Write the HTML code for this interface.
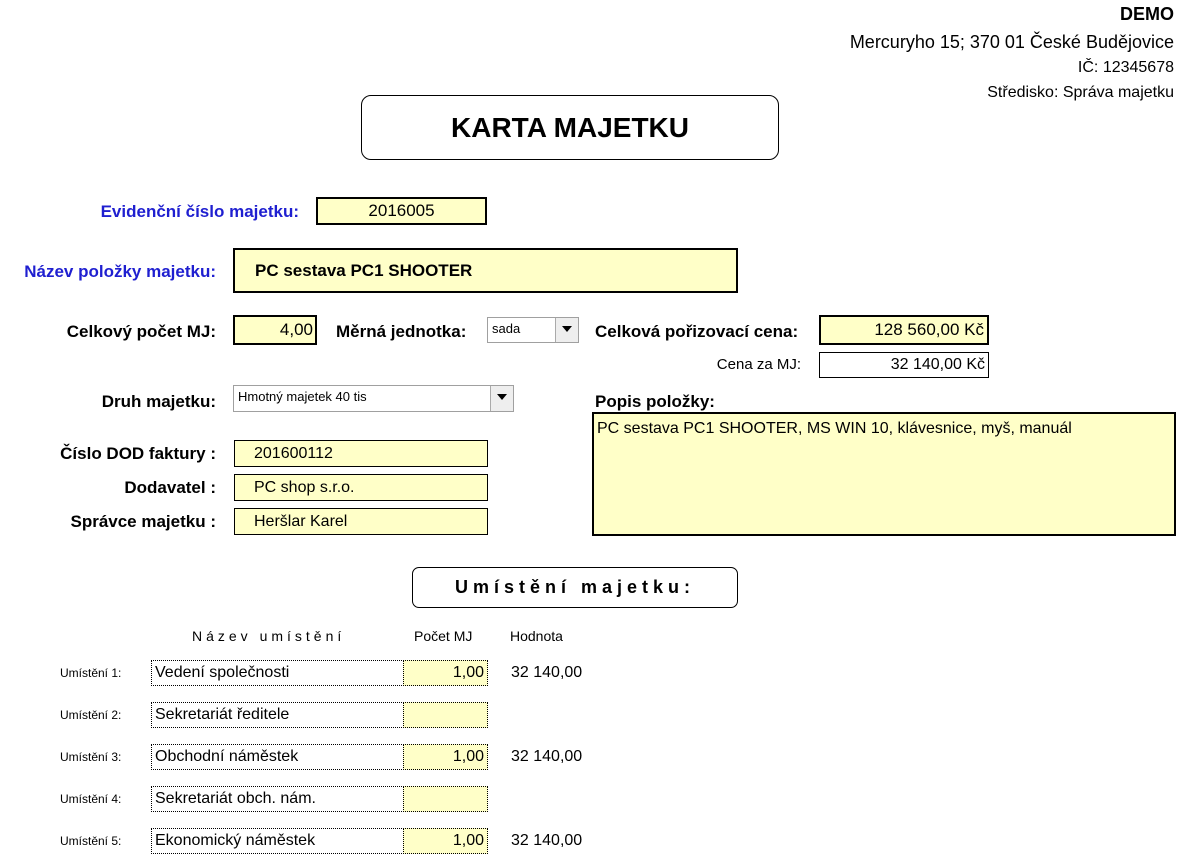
<!DOCTYPE html>
<html><head><meta charset="utf-8"><style>
body{margin:0;width:1189px;height:862px;background:#fff;position:relative;overflow:hidden;font-family:"Liberation Sans",sans-serif;color:#000}
.a{position:absolute;white-space:nowrap}
.r{text-align:right}
.b{font-weight:bold}
.y{background:#ffffc8;border:1px solid #000;box-sizing:border-box}
.k{border:2px solid #000}
.blue{color:#1f1fd0}
.dd{position:absolute;border:1px solid #a0a0a0;background:#fff;box-sizing:border-box;font-size:13px;padding:3px 4px}
.dd .btn{position:absolute;right:0;top:0;bottom:0;width:22px;background:#eee;border-left:1px solid #aaa}
.dd .btn:after{content:"";position:absolute;left:6px;top:8px;border-left:5px solid transparent;border-right:5px solid transparent;border-top:6px solid #000}
.dot{border:1px dotted #000;box-sizing:border-box}
</style></head><body>
<div class="a r b" style="right:15px;top:4px;font-size:18px">DEMO</div>
<div class="a r" style="right:15px;top:32px;font-size:18px">Mercuryho 15; 370 01 České Budějovice</div>
<div class="a r" style="right:15px;top:59px;font-size:16px">IČ: 12345678</div>
<div class="a r" style="right:15px;top:84px;font-size:16px">Středisko: Správa majetku</div>

<div class="a" style="left:361px;top:95px;width:416px;height:63px;border:1px solid #000;border-radius:10px;text-align:center;line-height:63px;font-size:28px;font-weight:bold">KARTA MAJETKU</div>

<div class="a b blue r" style="right:890px;top:202px;font-size:17px">Evidenční číslo majetku:</div>
<div class="a y k" style="left:316px;top:197px;width:171px;height:28px;text-align:center;font-size:17px;line-height:24px">2016005</div>

<div class="a b blue r" style="right:973px;top:262px;font-size:17px">Název položky majetku:</div>
<div class="a y k" style="left:233px;top:248px;width:505px;height:45px;font-size:17px;font-weight:bold;line-height:41px;padding-left:20px">PC sestava PC1 SHOOTER</div>

<div class="a b r" style="right:973px;top:322px;font-size:17px">Celkový počet MJ:</div>
<div class="a y k r" style="left:233px;top:315px;width:84px;height:30px;font-size:17px;line-height:26px;padding-right:2px">4,00</div>
<div class="a b" style="left:336px;top:322px;font-size:17px">Měrná jednotka:</div>
<div class="dd" style="left:487px;top:317px;width:92px;height:26px">sada<div class="btn"></div></div>
<div class="a b" style="left:595px;top:322px;font-size:17px">Celková pořizovací cena:</div>
<div class="a y k r" style="left:819px;top:315px;width:170px;height:30px;font-size:17px;line-height:26px;padding-right:3px">128 560,00 Kč</div>
<div class="a r" style="right:388px;top:356px;font-size:15px">Cena za MJ:</div>
<div class="a r" style="left:819px;top:352px;width:170px;height:26px;border:1px solid #000;box-sizing:border-box;font-size:16px;line-height:24px;padding-right:3px">32 140,00 Kč</div>

<div class="a b r" style="right:973px;top:392px;font-size:17px">Druh majetku:</div>
<div class="dd" style="left:233px;top:385px;width:281px;height:27px;font-size:13px">Hmotný majetek 40 tis<div class="btn"></div></div>
<div class="a b" style="left:595px;top:392px;font-size:17px">Popis položky:</div>
<div class="a y k" style="left:592px;top:412px;width:584px;height:124px;font-size:16px;padding:6px 3px">PC sestava PC1 SHOOTER, MS WIN 10, klávesnice, myš, manuál</div>

<div class="a b r" style="right:973px;top:444px;font-size:17px">Číslo DOD faktury :</div>
<div class="a y" style="left:234px;top:440px;width:254px;height:27px;font-size:16px;line-height:25px;padding-left:19px">201600112</div>
<div class="a b r" style="right:973px;top:478px;font-size:17px">Dodavatel :</div>
<div class="a y" style="left:234px;top:474px;width:254px;height:27px;font-size:16px;line-height:25px;padding-left:19px">PC shop s.r.o.</div>
<div class="a b r" style="right:973px;top:512px;font-size:17px">Správce majetku :</div>
<div class="a y" style="left:234px;top:508px;width:254px;height:27px;font-size:16px;line-height:25px;padding-left:19px">Heršlar Karel</div>

<div class="a" style="left:412px;top:567px;width:326px;height:41px;border:1px solid #000;border-radius:7px;box-sizing:border-box;text-align:center;line-height:39px;font-size:18px;font-weight:bold;letter-spacing:5px">Umístění majetku:</div>

<div class="a" style="left:192px;top:628px;font-size:14px;letter-spacing:4px">Název umístění</div>
<div class="a" style="left:414px;top:628px;font-size:14px">Počet MJ</div>
<div class="a" style="left:510px;top:628px;font-size:14px">Hodnota</div>

<div class="a" style="left:60px;top:666px;font-size:12px">Umístění 1:</div>
<div class="a dot" style="left:151px;top:660px;width:253px;height:26px;font-size:16px;line-height:24px;padding-left:3px">Vedení společnosti</div>
<div class="a dot r" style="left:403px;top:660px;width:85px;height:26px;background:#ffffc8;font-size:16px;line-height:24px;padding-right:3px">1,00</div>
<div class="a" style="left:511px;top:664px;font-size:16px">32 140,00</div>

<div class="a" style="left:60px;top:708px;font-size:12px">Umístění 2:</div>
<div class="a dot" style="left:151px;top:702px;width:253px;height:26px;font-size:16px;line-height:24px;padding-left:3px">Sekretariát ředitele</div>
<div class="a dot r" style="left:403px;top:702px;width:85px;height:26px;background:#ffffc8"></div>

<div class="a" style="left:60px;top:750px;font-size:12px">Umístění 3:</div>
<div class="a dot" style="left:151px;top:744px;width:253px;height:26px;font-size:16px;line-height:24px;padding-left:3px">Obchodní náměstek</div>
<div class="a dot r" style="left:403px;top:744px;width:85px;height:26px;background:#ffffc8;font-size:16px;line-height:24px;padding-right:3px">1,00</div>
<div class="a" style="left:511px;top:748px;font-size:16px">32 140,00</div>

<div class="a" style="left:60px;top:792px;font-size:12px">Umístění 4:</div>
<div class="a dot" style="left:151px;top:786px;width:253px;height:26px;font-size:16px;line-height:24px;padding-left:3px">Sekretariát obch. nám.</div>
<div class="a dot r" style="left:403px;top:786px;width:85px;height:26px;background:#ffffc8"></div>

<div class="a" style="left:60px;top:834px;font-size:12px">Umístění 5:</div>
<div class="a dot" style="left:151px;top:828px;width:253px;height:26px;font-size:16px;line-height:24px;padding-left:3px">Ekonomický náměstek</div>
<div class="a dot r" style="left:403px;top:828px;width:85px;height:26px;background:#ffffc8;font-size:16px;line-height:24px;padding-right:3px">1,00</div>
<div class="a" style="left:511px;top:832px;font-size:16px">32 140,00</div>
</body></html>
